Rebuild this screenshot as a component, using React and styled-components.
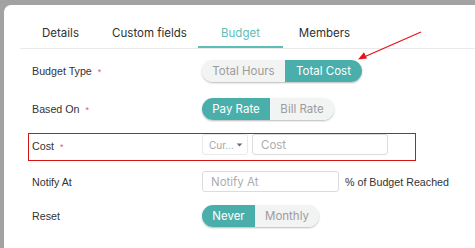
import React from "react";
import styled, { createGlobalStyle } from "styled-components";

const teal = "#4aafab";

const Global = createGlobalStyle`
  html, body {
    margin: 0;
    padding: 0;
    background: #a2a2a2;
    overflow: hidden;
  }
  * { box-sizing: border-box; }
`;

const Page = styled.div`
  position: relative;
  display: flex;
  height: 248px;
  padding: 5px 0 0 4px;
`;

const Modal = styled.div`
  flex: 1;
  background: #fff;
  border-radius: 7px 0 0 0;
`;

const TabBar = styled.div`
  display: flex;
  margin-left: 16px;
  border-bottom: 1px solid #ebebeb;
`;

const Tab = styled.div`
  width: ${(p) => p.$w}px;
  height: 43px;
  padding-top: 18px;
  line-height: 20px;
  text-align: center;
  font-family: Inter, sans-serif;
  font-size: 11.5px;
  color: ${(p) => (p.$active ? "#5fbdb8" : "#2f2f2f")};
  border-bottom: 2px solid ${(p) => (p.$active ? "#5fbdb8" : "transparent")};
`;

const Form = styled.div`
  padding-left: 28px;
`;

const Row = styled.div`
  display: flex;
  align-items: center;
  height: ${(p) => p.$h}px;
  margin-top: ${(p) => p.$mt}px;
`;

const CostBox = styled.div`
  display: flex;
  align-items: flex-start;
  width: 388px;
  height: 28px;
  margin: 13px 0 0 -4px;
  padding-left: 3px;
  border: 1px solid #d21414;
`;

const Label = styled.div`
  width: 170px;
  line-height: 24px;
  font-family: "Liberation Sans", Arial, sans-serif;
  font-size: 10.7px;
  color: #333;
`;

const Req = styled.span`
  margin-left: 6px;
  color: #e25c5c;
  font-size: 9px;
`;

const Toggle = styled.div`
  display: flex;
  height: 22px;
  border-radius: 11px;
  overflow: hidden;
  box-shadow: 0 1px 2px rgba(0, 0, 0, 0.28);
`;

const Segment = styled.div`
  width: ${(p) => p.$w}px;
  display: flex;
  align-items: center;
  justify-content: center;
  font-family: Inter, sans-serif;
  font-size: 11.5px;
  color: ${(p) => (p.$active ? "#fff" : "#9c9c9c")};
  background: ${(p) => (p.$active ? teal : "#f2f3f3")};
`;

const Select = styled.div`
  display: flex;
  align-items: center;
  justify-content: space-between;
  width: 46px;
  height: 21px;
  padding: 0 4px 0 6px;
  border: 1px solid #e9e9e9;
  border-radius: 3px;
  font-family: Inter, sans-serif;
  font-size: 10px;
  color: #a5a5a5;
`;

const Input = styled.input`
  width: ${(p) => p.$w}px;
  height: 21px;
  margin-left: ${(p) => p.$ml || 0}px;
  padding: 0 8px;
  border: 1px solid #dcdcdc;
  border-radius: 3px;
  font-family: Inter, sans-serif;
  font-size: 11.5px;
  outline: none;
  &::placeholder {
    color: #acacac;
  }
`;

const Suffix = styled.span`
  margin-left: 6px;
  font-family: "Liberation Sans", Arial, sans-serif;
  font-size: 10.7px;
  color: #333;
`;

const Annotation = styled.svg`
  position: absolute;
  left: 0;
  top: 0;
  pointer-events: none;
`;

export default function App() {
  return (
    <>
      <Global />
      <Page>
        <Modal>
          <TabBar>
            <Tab $w={81}>Details</Tab>
            <Tab $w={97}>Custom fields</Tab>
            <Tab $w={85} $active>
              Budget
            </Tab>
            <Tab $w={83}>Members</Tab>
          </TabBar>
          <Form>
            <Row $h={22} $mt={11}>
              <Label>
                Budget Type<Req>*</Req>
              </Label>
              <Toggle>
                <Segment $w={83}>Total Hours</Segment>
                <Segment $w={77} $active>
                  Total Cost
                </Segment>
              </Toggle>
            </Row>
            <Row $h={22} $mt={16}>
              <Label>
                Based On<Req>*</Req>
              </Label>
              <Toggle>
                <Segment $w={68} $active>
                  Pay Rate
                </Segment>
                <Segment $w={64}>Bill Rate</Segment>
              </Toggle>
            </Row>
            <CostBox>
              <Label>
                Cost<Req>*</Req>
              </Label>
              <Select>
                <span>Cur…</span>
                <svg width="7" height="4" viewBox="0 0 8 5">
                  <path d="M0.5 0.5h7L4 4.5z" fill="#666" />
                </svg>
              </Select>
              <Input $w={136} $ml={4} placeholder="Cost" />
            </CostBox>
            <Row $h={21} $mt={10}>
              <Label>Notify At</Label>
              <Input $w={137} placeholder="Notify At" />
              <Suffix>% of Budget Reached</Suffix>
            </Row>
            <Row $h={22} $mt={13}>
              <Label>Reset</Label>
              <Toggle>
                <Segment $w={53} $active>
                  Never
                </Segment>
                <Segment $w={64}>Monthly</Segment>
              </Toggle>
            </Row>
          </Form>
        </Modal>
        <Annotation width="475" height="248">
          <line x1="421" y1="32" x2="364" y2="57" stroke="#e8141b" strokeWidth="1.3" />
          <polygon points="358,59.5 367,58.6 364,52.2" fill="#e8141b" />
        </Annotation>
      </Page>
    </>
  );
}
